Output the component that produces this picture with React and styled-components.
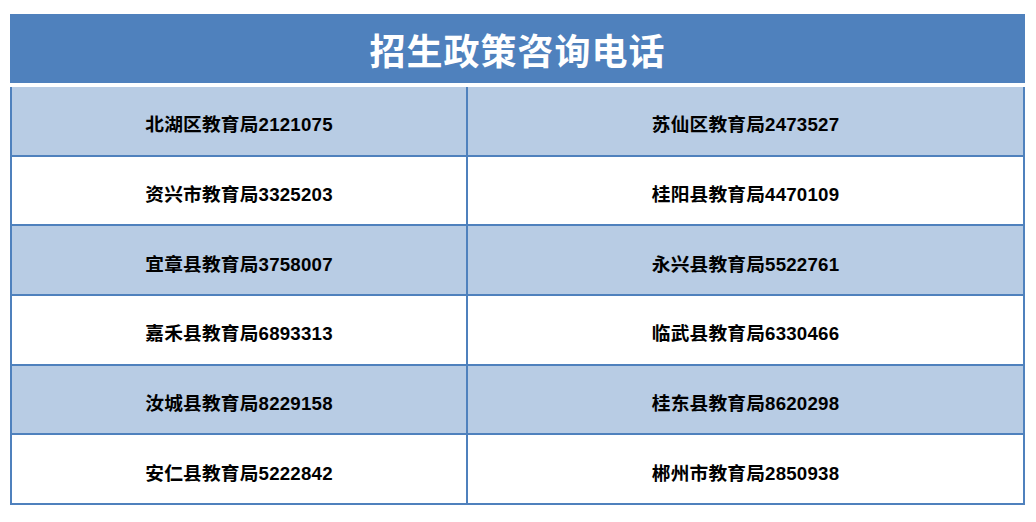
import React from 'react';
import styled, { createGlobalStyle } from 'styled-components';

const GlobalStyle = createGlobalStyle`
  html, body {
    margin: 0;
    padding: 0;
    background: #ffffff;
  }
`;

const PageWrapper = styled.div`
  padding: 14px 11px 0 10px;
  font-family: "Liberation Sans", "Noto Sans CJK SC", sans-serif;
`;

const Header = styled.div`
  height: 69px;
  display: flex;
  align-items: center;
  justify-content: center;
  background-color: #4f81bd;
  color: #ffffff;
  font-size: 36px;
  font-weight: 700;
  letter-spacing: 1px;
  margin-bottom: 4px;
`;

const Table = styled.div`
  display: grid;
  grid-template-columns: 456px 1fr;
  border-left: 2px solid #4f81bd;
  border-right: 2px solid #4f81bd;
`;

const Cell = styled.div`
  display: flex;
  align-items: center;
  justify-content: center;
  background-color: ${props => (props.shaded ? '#b8cce4' : '#ffffff')};
  border-bottom: 2px solid #4f81bd;
  border-right: ${props => (props.first ? '2px solid #4f81bd' : 'none')};
  color: #000000;
  font-size: 18.7px;
  font-weight: 700;
  letter-spacing: 0.2px;
  padding-top: 4px;
  box-sizing: content-box;
  height: 63.67px;
`;

const rows = [
  ['北湖区教育局2121075', '苏仙区教育局2473527'],
  ['资兴市教育局3325203', '桂阳县教育局4470109'],
  ['宜章县教育局3758007', '永兴县教育局5522761'],
  ['嘉禾县教育局6893313', '临武县教育局6330466'],
  ['汝城县教育局8229158', '桂东县教育局8620298'],
  ['安仁县教育局5222842', '郴州市教育局2850938'],
];

const App = () => (
  <PageWrapper>
    <GlobalStyle />
    <Header>招生政策咨询电话</Header>
    <Table>
      {rows.map((row, i) => (
        <React.Fragment key={i}>
          <Cell shaded={i % 2 === 0} first>{row[0]}</Cell>
          <Cell shaded={i % 2 === 0}>{row[1]}</Cell>
        </React.Fragment>
      ))}
    </Table>
  </PageWrapper>
);

export default App;
